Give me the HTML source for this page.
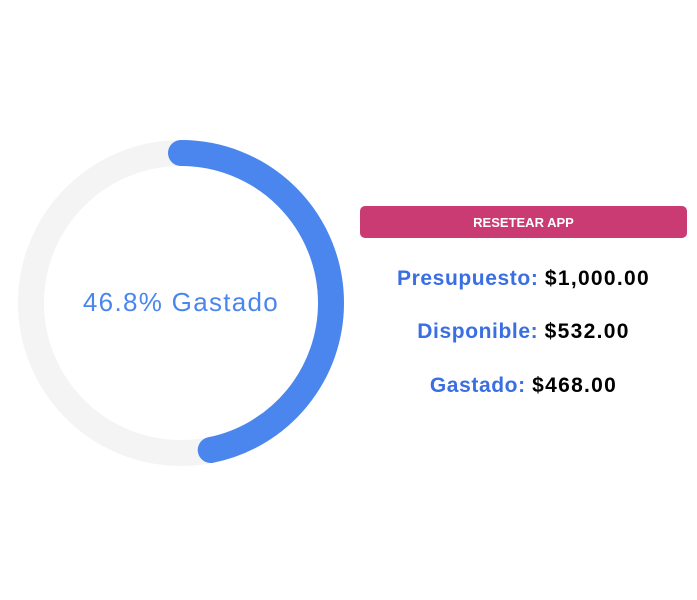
<!DOCTYPE html>
<html><head><style>
body{margin:0;width:697px;height:600px;background:#fff;font-family:"Liberation Sans",sans-serif;position:relative;overflow:hidden}
svg{position:absolute;left:0;top:0}
.btn{position:absolute;left:360px;top:206px;width:327px;height:32px;background:#c93b72;border-radius:5px;color:#fff;font-weight:bold;font-size:13px;text-align:center;line-height:33px}
.row{position:absolute;left:360px;width:327px;text-align:center;font-weight:bold;font-size:21px;letter-spacing:0.6px;white-space:nowrap}
.row span{color:#3a6ee3}
.row b{color:#000;font-weight:900;letter-spacing:1.3px}
</style></head><body>
<svg width="697" height="600">
<circle cx="181" cy="303" r="150" fill="none" stroke="#f4f4f4" stroke-width="26"/>
<circle cx="181" cy="303" r="150" fill="none" stroke="#4a86ee" stroke-width="26" stroke-linecap="round" stroke-dasharray="441.1 1000" transform="rotate(-90 181 303)"/>
<text x="181" y="311" text-anchor="middle" font-family="Liberation Sans, sans-serif" font-size="26" letter-spacing="1.3" fill="#4a86ee">46.8% Gastado</text>
</svg>
<div class="btn">RESETEAR APP</div>
<div class="row" style="top:267px"><span>Presupuesto:</span> <b>$1,000.00</b></div>
<div class="row" style="top:320px"><span>Disponible:</span> <b>$532.00</b></div>
<div class="row" style="top:374px"><span>Gastado:</span> <b>$468.00</b></div>
</body></html>
